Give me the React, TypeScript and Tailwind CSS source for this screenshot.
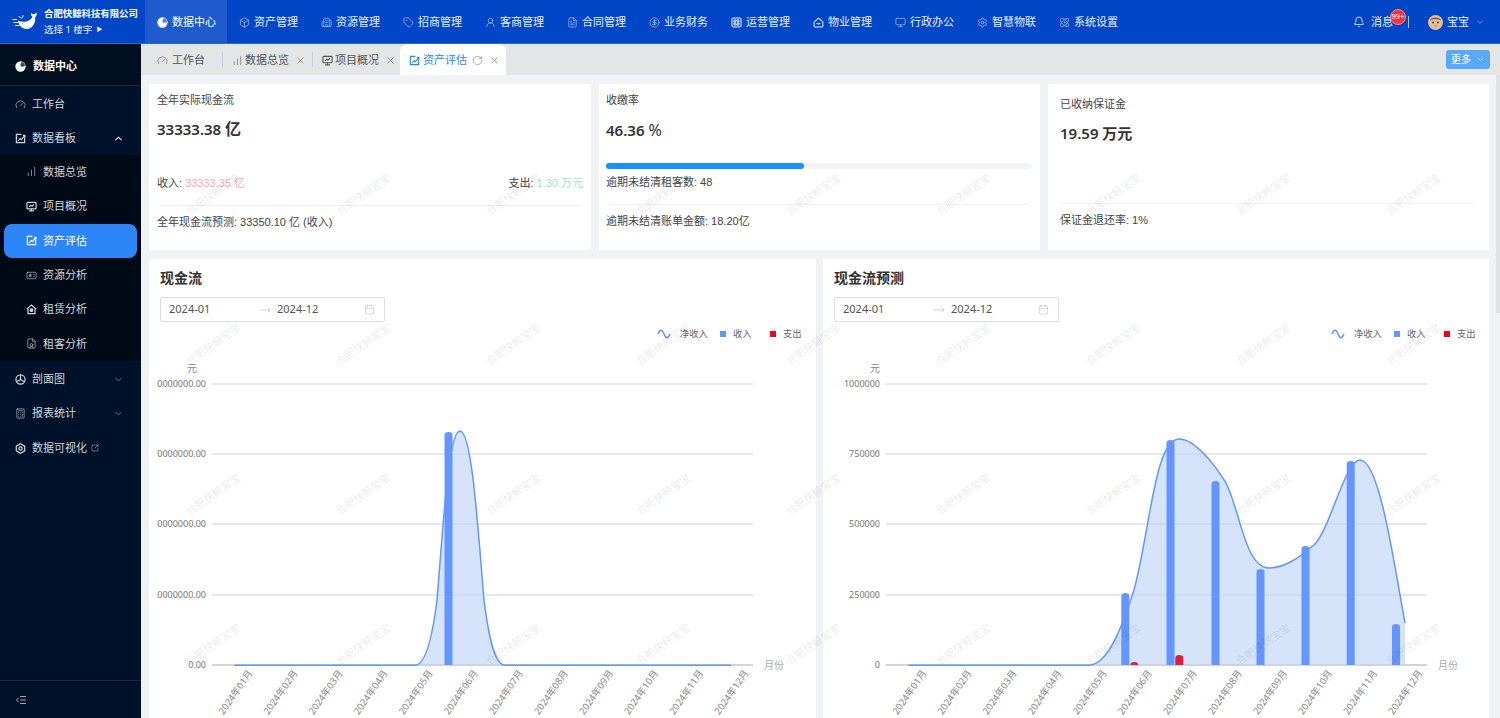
import React from "react";
import {
  Box, Building2, Tag, UserRound, FileText, CircleDollarSign, Monitor, Atom, Settings, Bell, ChevronDown, ChevronUp,
  Gauge, ChartNoAxesColumnIncreasing, IdCard, FileUser, Calculator,
  SquareArrowOutUpRight, X, RotateCw, Calendar, IndentDecrease, MoveRight,
} from "lucide-react";

const Disc = ({ s = 12 }: { s?: number }) => (
  <svg width={s} height={s} viewBox="0 0 12 12" className="shrink-0">
    <circle cx="6" cy="6" r="5.6" fill="#fff" />
    <path d="M6 5.4 C7.4 6.8 9.6 6.6 11 5 C10.8 3.6 9.6 1.8 7.4 1.2 C6.4 2.4 5.6 4 6 5.4Z" fill="currentColor" opacity=".75" />
  </svg>
);

const Whale = () => (
  <svg width="26" height="20" viewBox="0 0 26 20" className="shrink-0">
    <path d="M6 8.6 C9 10.2 14 10.2 17 8.4 C19 7.2 20 6 20.4 4.8 C19.4 4 18.8 2.6 19 1 C20.2 1.8 21 2.2 21.8 2.2 C22.6 2 23.6 1.6 24.6 0.6 C25 2.6 24.4 4.4 23.2 5.2 C23.6 11.6 20.2 17 14.6 17 C9.6 17 6.4 13 6 8.6Z" fill="#fff" />
    <path d="M0.5 7.5 H5 M1.5 10.5 H6 M3 13.5 H7.5" stroke="#fff" strokeWidth="0.9" />
    <path d="M9.5 6.4 C10.8 5.4 11.2 4.2 11 3 M9.5 6.4 C8.6 5.2 7.6 4.6 6.6 4.6" stroke="#fff" strokeWidth="0.9" fill="none" />
  </svg>
);

const Avatar = () => (
  <svg width="15" height="15" viewBox="0 0 16 16" className="shrink-0">
    <circle cx="8" cy="8" r="8" fill="#e6bf97" />
    <path d="M2 6 C3 1.5 13 1.5 14 6 C11 4 5 4 2 6Z" fill="#7b5a40" />
    <circle cx="5.4" cy="8" r="1" fill="#4a3425" />
    <circle cx="10.6" cy="8" r="1" fill="#4a3425" />
    <ellipse cx="8" cy="11.4" rx="1.6" ry="1" fill="#d58f75" />
  </svg>
);

type IP = { size?: number; strokeWidth?: number; className?: string };

const SquareLine = ({ size = 11, strokeWidth = 1.3, className }: IP) => (
  <svg width={size} height={size} viewBox="0 0 12 12" fill="none" stroke="currentColor" strokeWidth={strokeWidth} className={className}>
    <path d="M10.5 5 V10.5 H1.5 V1.5 H7" />
    <path d="M3.2 9 L5.6 6 L7 7.2 L10.6 2.8 M8.6 2.6 H10.8 V4.8" />
  </svg>
);

const MonitorBars = ({ size = 11, strokeWidth = 1.3, className }: IP) => (
  <svg width={size} height={size} viewBox="0 0 12 12" fill="none" stroke="currentColor" strokeWidth={strokeWidth} className={className}>
    <rect x="1" y="1.5" width="10" height="7" rx="1" />
    <path d="M6 8.5 V10.5 M3.4 10.8 H8.6 M3.4 6.4 L5.2 4.6 L6.6 5.6 L8.6 3.6" />
  </svg>
);

const RoundSquareOrbit = ({ size = 11, strokeWidth = 1.3, className }: IP) => (
  <svg width={size} height={size} viewBox="0 0 12 12" fill="none" stroke="currentColor" strokeWidth={strokeWidth} className={className}>
    <rect x="1" y="1" width="10" height="10" rx="2" />
    <ellipse cx="6" cy="6" rx="3.6" ry="1.6" transform="rotate(45 6 6)" />
    <ellipse cx="6" cy="6" rx="3.6" ry="1.6" transform="rotate(-45 6 6)" />
  </svg>
);

const HouseSmile = ({ size = 11, strokeWidth = 1.3, className }: IP) => (
  <svg width={size} height={size} viewBox="0 0 12 12" fill="none" stroke="currentColor" strokeWidth={strokeWidth} className={className}>
    <path d="M1.2 5.4 L6 1.2 L10.8 5.4 V9.8 Q10.8 10.8 9.8 10.8 H2.2 Q1.2 10.8 1.2 9.8Z" />
    <path d="M4 6.6 Q6 8.6 8 6.6" />
  </svg>
);

const CircleY = ({ size = 11, strokeWidth = 1.3, className }: IP) => (
  <svg width={size} height={size} viewBox="0 0 12 12" fill="none" stroke="currentColor" strokeWidth={strokeWidth} className={className}>
    <circle cx="6" cy="6" r="5" />
    <path d="M6 1.2 V6 L1.8 8.4 M6 6 L10.2 8.4" />
  </svg>
);

const HexDot = ({ size = 11, strokeWidth = 1.3, className }: IP) => (
  <svg width={size} height={size} viewBox="0 0 12 12" fill="none" stroke="currentColor" strokeWidth={strokeWidth} className={className}>
    <path d="M6 .8 L10.6 3.4 V8.6 L6 11.2 L1.4 8.6 V3.4Z" />
    <circle cx="6" cy="6" r="1.8" />
  </svg>
);

const HouseDot = ({ size = 11, strokeWidth = 1.3, className }: IP) => (
  <svg width={size} height={size} viewBox="0 0 12 12" fill="none" stroke="currentColor" strokeWidth={strokeWidth} className={className}>
    <path d="M.8 5.6 L6 1.2 L11.2 5.6 M2.2 5 V10.6 H9.8 V5" />
    <circle cx="6" cy="6.8" r="1.4" fill="currentColor" />
  </svg>
);

const navItems: [React.ComponentType<any>, string][] = [
  [Box, "资产管理"], [Building2, "资源管理"], [Tag, "招商管理"], [UserRound, "客商管理"], [FileText, "合同管理"],
  [CircleDollarSign, "业务财务"], [RoundSquareOrbit, "运营管理"], [HouseSmile, "物业管理"], [Monitor, "行政办公"], [Settings, "智慧物联"], [Atom, "系统设置"],
];

function TopBar() {
  return (
    <header className="flex h-11 shrink-0 items-stretch border-b border-[#2a6ad6] bg-[#0046c7] text-[11px] text-[#e8eefb]">
      <div className="flex w-[145px] shrink-0 items-center gap-[6px] pl-3">
        <Whale />
        <div className="flex flex-col gap-[3px] leading-[13px]">
          <span className="whitespace-nowrap text-[9.4px] font-bold text-white">合肥快鲸科技有限公司</span>
          <span className="flex items-center gap-1 whitespace-nowrap text-[9.5px]">选择 1 楼宇 <span className="text-[6px]">▶</span></span>
        </div>
      </div>
      <div className="flex w-[82px] items-center gap-1 bg-[#1f5bcc] pl-3 pt-px text-white">
        <span className="text-[#1f5bcc]"><Disc s={11} /></span>
        数据中心
      </div>
      {navItems.map(([I, t]) => (
        <div key={t} className="flex w-[82px] items-center gap-1 pl-3 pt-px">
          <I size={11} strokeWidth={1.1} className="shrink-0" />
          {t}
        </div>
      ))}
      <div className="ml-auto flex items-center pr-[15px] pt-px">
        <Bell size={12} strokeWidth={1.5} className="text-white" />
        <span className="relative ml-[6px]">
          消息
          <span className="absolute left-[19px] top-[-5px] flex h-4 w-4 items-center justify-center rounded-full border border-[#f58a95] bg-[#f5333f] text-[7.5px] text-white">99+</span>
        </span>
        <span className="ml-[15px] h-3 w-px bg-[#a9c2ef]" />
        <span className="ml-[19px] flex items-center gap-1">
          <Avatar />
          宝宝
          <ChevronDown size={10} strokeWidth={1.2} className="ml-[2px]" />
        </span>
      </div>
    </header>
  );
}

const SideRow = ({ icon, label, right, sub, active }: { icon: React.ReactNode; label: React.ReactNode; right?: React.ReactNode; sub?: boolean; active?: boolean }) => (
  <div className={`flex h-[34.4px] items-center gap-[6px] pr-[17px] text-[11px] ${sub ? "pl-[26px]" : "pl-[15px]"} ${active ? "mx-1 rounded-lg bg-[#2d86f7] !pl-[22px] text-white" : "text-[#d0d6dc]"}`}>
    {icon}
    <span className="flex-1 whitespace-nowrap">{label}</span>
    {right}
  </div>
);

function Sidebar() {
  const ic = { size: 11, strokeWidth: 1.3, className: "shrink-0" };
  return (
    <aside className="flex h-full w-[141px] shrink-0 flex-col bg-[#001229]">
      <div className="flex h-[42px] shrink-0 items-center gap-[7px] border-b border-[#1b2a3a] bg-[#000f20] pl-[15px] pt-[3px] text-[11px] font-bold text-white">
        <span className="text-[#000f20]"><Disc s={11} /></span>
        数据中心
      </div>
      <div className="pt-[1px]">
        <SideRow icon={<Gauge {...ic} />} label="工作台" />
        <SideRow icon={<SquareLine {...ic} />} label="数据看板" right={<ChevronUp size={11} strokeWidth={2.2} className="text-[#e0e4e8]" />} />
      </div>
      <div className="-mt-px mb-px bg-[#000a17]">
        <SideRow sub icon={<ChartNoAxesColumnIncreasing {...ic} />} label="数据总览" />
        <SideRow sub icon={<MonitorBars {...ic} />} label="项目概况" />
        <SideRow sub active icon={<SquareLine {...ic} />} label="资产评估" />
        <SideRow sub icon={<IdCard {...ic} />} label="资源分析" />
        <SideRow sub icon={<HouseDot {...ic} />} label="租赁分析" />
        <SideRow sub icon={<FileUser {...ic} />} label="租客分析" />
      </div>
      <SideRow icon={<CircleY {...ic} />} label="剖面图" right={<ChevronDown size={11} strokeWidth={1.6} className="text-[#7e8a96]" />} />
      <SideRow icon={<Calculator {...ic} />} label="报表统计" right={<ChevronDown size={11} strokeWidth={1.6} className="text-[#7e8a96]" />} />
      <SideRow icon={<HexDot {...ic} />} label={<span className="flex items-center gap-1">数据可视化<SquareArrowOutUpRight size={8} strokeWidth={1.4} /></span>} />
      <div className="mt-auto flex h-[38px] items-center border-t border-[#1b2a3a] pl-[15px] text-[#d8dee4]">
        <IndentDecrease size={12} strokeWidth={1.5} />
      </div>
    </aside>
  );
}

function Tabs() {
  const ic = { size: 11, strokeWidth: 1.2, className: "shrink-0" };
  return (
    <div className="flex h-[31px] shrink-0 items-stretch bg-[#e4e5e7] text-[11px] text-[#555]">
      <div className="flex w-[81px] items-center gap-1 pl-[16px] pt-px">
        <Gauge {...ic} />工作台
      </div>
      <div className="my-[8px] w-px bg-[#c2d0e2]" />
      <div className="flex w-[89px] items-center gap-[2px] pl-[9px] pt-px">
        <ChartNoAxesColumnIncreasing {...ic} />
        数据总览
        <X size={11} strokeWidth={1.1} className="ml-[4px] shrink-0" />
      </div>
      <div className="my-[8px] w-px bg-[#c2d0e2]" />
      <div className="flex w-[87px] items-center gap-[2px] pl-[9px] pt-px">
        <MonitorBars {...ic} />
        项目概况
        <X size={11} strokeWidth={1.1} className="ml-[4px] shrink-0" />
      </div>
      <div className="flex w-[106px] items-center rounded-t-lg bg-white pl-[9px] pt-px text-[#2d86f7]">
        <SquareLine {...ic} />
        <span className="ml-[3px]">资产评估</span>
        <RotateCw size={11} strokeWidth={1.1} className="ml-[5px] text-[#666]" />
        <X size={11} strokeWidth={1.1} className="ml-[6px] text-[#666]" />
      </div>
      <div className="ml-auto mr-[10px] mt-[6px] flex h-[19px] w-[44px] items-center justify-center gap-[5px] rounded-[3px] bg-[#59a9fb] text-[10px] text-white">
        更多
        <ChevronDown size={9} strokeWidth={1.4} />
      </div>
    </div>
  );
}

const LINE = "font-['Liberation_Sans','Noto_Sans_CJK_SC',sans-serif] leading-[15px]";

function StatCards() {
  return (
    <div className="grid grid-cols-[442px_441px_441px] gap-x-2 text-[11px] text-[#444]">
      <div className="h-[166px] bg-white px-2 pt-[9px]">
        <div className={LINE}>全年实际现金流</div>
        <div className="mt-[10px] text-[15px] font-semibold leading-[22px] text-[#333]">33333.38 <span className="text-[16px]">亿</span></div>
        <div className={`mt-[36px] flex justify-between ${LINE}`}>
          <span>收入: <span className="text-[#fbabab]">33333.35 亿</span></span>
          <span>支出: <span className="text-[#9fe6cb]">1.30 万元</span></span>
        </div>
        <div className="mx-[3px] mt-[14px] border-t border-[#f2f2f2]" />
        <div className={`mt-[9px] ${LINE}`}>全年现金流预测: 33350.10 亿 (收入)</div>
      </div>
      <div className="h-[166px] bg-white pl-[7px] pt-[9px]">
        <div className={LINE}>收缴率</div>
        <div className="mt-[11px] text-[15px] font-semibold leading-[22px] text-[#333]">46.36 <span className="text-[16px] font-normal">%</span></div>
        <div className="mt-[22px] h-[6px] w-[426px] rounded-full bg-[#f3f4f5]">
          <div className="h-full w-[198px] rounded-full bg-[#1890ff]" />
        </div>
        <div className={`mt-[6px] ${LINE}`}>逾期未结清租客数: 48</div>
        <div className="ml-[3px] mr-[11px] mt-[14px] border-t border-[#f0f1f3]" />
        <div className={`mt-[9px] ${LINE}`}>逾期未结清账单金额: 18.20亿</div>
      </div>
      <div className="h-[166px] bg-white px-3 pt-[13px]">
        <div className={LINE}>已收纳保证金</div>
        <div className="mt-[10px] text-[15px] font-semibold leading-[22px] text-[#333]">19.59 万元</div>
        <div className="mr-[4px] mt-[59px] border-t border-[#f0f1f3]" />
        <div className={`mt-[9px] ${LINE}`}>保证金退还率: 1%</div>
      </div>
    </div>
  );
}

const months = Array.from({ length: 12 }, (_, i) => `2024年${String(i + 1).padStart(2, "0")}月`);
const ys = [384, 454, 524, 595, 665];

type Bar = [number, number, string];

function Chart({ x0, ticks, unitX, area, line, bars }: { x0: number; ticks: string[]; unitX: number; area: string; line: string; bars: Bar[] }) {
  const gx = x0 + 55;
  const gxEnd = gx + 541;
  const lx = x0 + 501;
  return (
    <svg width="650" height="396" viewBox={`${x0} 322 650 396`} className="block">
      <path d={`M${lx} 334 c2 -5 4 -5 6 0 s4 5 6 0`} fill="none" stroke="#6596ff" strokeWidth="1.6" />
      <text x={lx + 22} y="337" fontSize="9.3" fill="#666">净收入</text>
      <rect x={lx + 62} y="331" width="6" height="6" fill="#6596ff" />
      <text x={lx + 75} y="337" fontSize="9.3" fill="#666">收入</text>
      <rect x={lx + 112} y="331" width="6" height="6" fill="#f5000f" />
      <text x={lx + 125} y="337" fontSize="9.3" fill="#666">支出</text>
      <text x={unitX} y="372" fontSize="10" fill="#888" textAnchor="end">元</text>
      {ys.map((y, i) => (
        <g key={y}>
          <line x1={gx} x2={gxEnd} y1={y} y2={y} stroke={i === 4 ? "#c4c7cc" : "#dfe0e3"} strokeWidth="1.3" />
          <text x={gx - 6} y={y + 3.2} fontSize="9" fill="#777" textAnchor="end">{ticks[i]}</text>
        </g>
      ))}
      <text x={gxEnd + 11} y="669" fontSize="10" fill="#aaa">月份</text>
      <path d={area} fill="#bfd4f9" fillOpacity="0.65" />
      {bars.map(([x, top, c], i) => {
        const r = Math.min(3, 665 - top);
        return <path key={i} d={`M${x} 665 V${top + r} a4 ${r} 0 0 1 8 0 V665Z`} fill={c} />;
      })}
      <path d={line} fill="none" stroke="#6596ff" strokeWidth="1.5" />
      {months.map((m, i) => (
        <text key={m} fontSize="9.5" fill="#888" textAnchor="end" transform={`translate(${gx + 41 + i * 45.08} 673) rotate(-55)`}>{m}</text>
      ))}
    </svg>
  );
}

const DateRange = () => (
  <div className="ml-[11px] flex h-[25px] w-[225px] items-center rounded-[2px] border border-[#dcdcdc] pl-2 text-[11px] text-[#555]">
    <span className="w-[90px]">2024-01</span>
    <MoveRight size={12} strokeWidth={1} className="text-[#aaa]" />
    <span className="ml-[6px] w-[87px]">2024-12</span>
    <Calendar size={11} strokeWidth={1.2} className="text-[#bbb]" />
  </div>
);

const leftLine = "M234.5 665.3 L415 665.3 C425 665 432 640 437 600 C443 530 448 431 460 431 C472 431 478 530 484 600 C489 640 495 665 505 665.3 L731 665.3";
const leftArea = leftLine + " Z";
const rightLine = "M908.5 665.3 L1088 665.3 C1105 665 1118 640 1134 590 C1150 530 1155 439 1179 439 C1195 439 1215 465 1226 483 C1240 510 1245 568 1269 568 C1285 568 1300 557 1314 545 C1330 530 1345 460 1360 460 C1380 460 1395 570 1405 623";
const rightArea = rightLine + " V665.3 Z";

const C = "#6596ff";
const R = "#dc1f3f";

function ChartCard({ title, children }: { title: string; children: React.ReactNode }) {
  return (
    <div className="h-[470px] overflow-hidden bg-white">
      <div className="ml-[11px] pb-[10px] pt-[9px] text-[14px] font-bold leading-[19px] text-[#333]">{title}</div>
      <DateRange />
      <div className="ml-2">{children}</div>
    </div>
  );
}

function Watermarks() {
  return (
    <div className="pointer-events-none absolute left-[138px] top-[120px] grid grid-cols-[repeat(9,150px)] auto-rows-[150px]">
      {Array.from({ length: 36 }, (_, i) => (
        <div key={i} className="flex items-center justify-center">
          <span className="-rotate-[35deg] whitespace-nowrap text-[10.5px] text-black/[0.1]">合肥快鲸宝宝</span>
        </div>
      ))}
    </div>
  );
}

export default function App() {
  return (
    <div className="relative flex h-screen w-full flex-col overflow-hidden bg-[#f0f2f5] font-['Noto_Sans','Noto_Sans_CJK_SC',sans-serif]">
      <TopBar />
      <div className="flex min-h-0 flex-1">
        <Sidebar />
        <main className="flex min-w-0 flex-1 flex-col">
          <Tabs />
          <div className="flex flex-col gap-[9px] pl-2 pt-[9px]">
            <StatCards />
            <div className="grid grid-cols-[667px_666px] gap-x-[7px]">
              <ChartCard title="现金流">
                <Chart x0={157} unitX={197} ticks={["40000000000.00", "30000000000.00", "20000000000.00", "10000000000.00", "0.00"]} area={leftArea} line={leftLine} bars={[[444.5, 432, C]]} />
              </ChartCard>
              <ChartCard title="现金流预测">
                <Chart x0={831} unitX={880} ticks={["1000000", "750000", "500000", "250000", "0"]} area={rightArea} line={rightLine} bars={[
                  [1121.3, 593, C], [1130.3, 662, R], [1166.5, 440, C], [1175.3, 655, R], [1211.5, 481, C], [1256.5, 569, C], [1301.5, 546, C], [1346.7, 461, C], [1392, 624, C],
                ]} />
              </ChartCard>
            </div>
          </div>
        </main>
      </div>
      <Watermarks />
      <div className="absolute right-0 top-[75px] h-[238px] w-[4px] bg-[#dfe1e5]" />
    </div>
  );
}
